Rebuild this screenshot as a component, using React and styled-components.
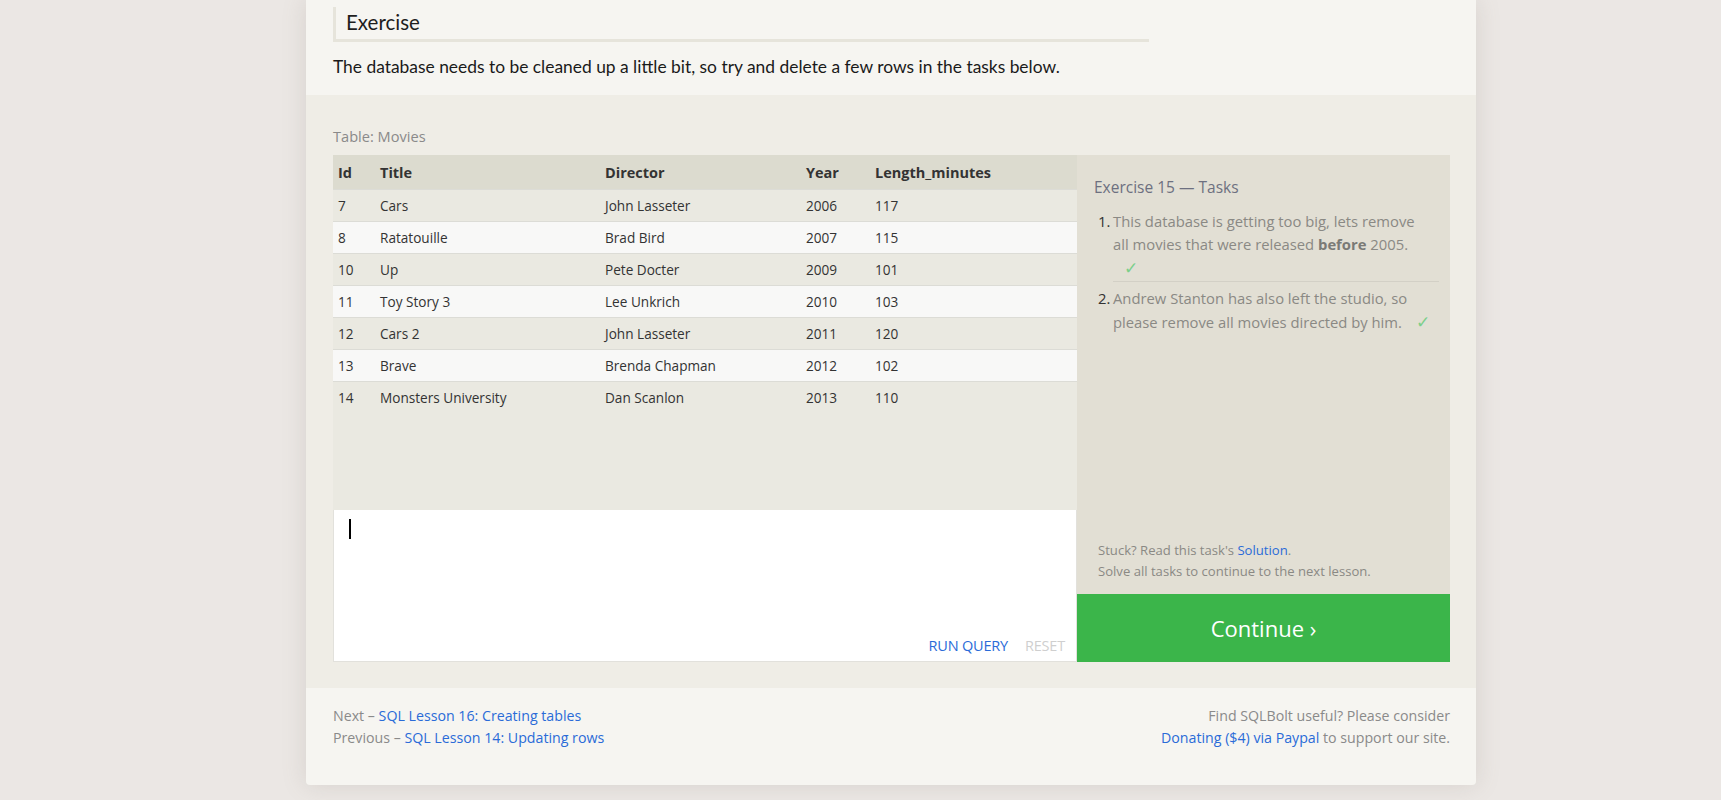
import React from 'react';
import styled, { createGlobalStyle } from 'styled-components';

const GlobalStyle = createGlobalStyle`
  body {
    margin: 0;
    background: #ebe7e4;
    font-family: "Open Sans", "Noto Sans", sans-serif;
  }
`;

const Page = styled.div`
  min-height: 800px;
  padding-left: 306px;
`;

const Sheet = styled.div`
  width: 1170px;
  background: #f6f5f1;
  border-radius: 0 0 4px 4px;
  box-shadow: 0 0 24px rgba(120, 110, 100, 0.18);
`;

const Intro = styled.section`
  padding: 7px 27px 0;
  height: 88px;
`;

const Heading = styled.h3`
  margin: 0;
  width: 803px;
  height: 32px;
  padding-left: 10px;
  border-left: 3px solid #e6e4db;
  border-bottom: 3px solid #e6e4db;
  font-family: "Lato", sans-serif;
  font-weight: 400;
  font-size: 20.5px;
  line-height: 30px;
  color: #1e1e1e;
`;

const Lead = styled.p`
  margin: 13px 0 0;
  font-family: "Lato", sans-serif;
  font-size: 17.4px;
  line-height: 24px;
  color: #1a1a1a;
`;

const Exercise = styled.section`
  background: #efede6;
  padding: 31px 26px 26px 27px;
`;

const Caption = styled.div`
  font-size: 14.6px;
  line-height: 20px;
  color: #8a8a8a;
  margin-bottom: 9px;
`;

const Workspace = styled.div`
  display: flex;
`;

const Left = styled.div`
  width: 744px;
  display: flex;
  flex-direction: column;
`;

const TableArea = styled.div`
  height: 355px;
  background: #eae9e1;
`;

const Row = styled.div`
  display: grid;
  grid-template-columns: 42px 225px 201px 69px 1fr;
  height: ${(p) => (p.$head ? '34px' : '32px')};
  align-items: center;
  background: ${(p) => (p.$head ? '#dcdbcf' : p.$even ? '#f8f8f7' : '#eae9e1')};
  border-top: ${(p) => (p.$head ? 'none' : '1px solid #dcdcd6')};
  box-sizing: border-box;
  font-size: ${(p) => (p.$head ? '14.5px' : '13.6px')};
  font-weight: ${(p) => (p.$head ? 700 : 400)};
  color: ${(p) => (p.$head ? '#333' : '#333')};
`;

const Cell = styled.div`
  padding-left: 5px;
  white-space: nowrap;
`;

const Editor = styled.div`
  height: 152px;
  background: #fff;
  border: 1px solid #e2e1dc;
  border-top: none;
  box-sizing: border-box;
  display: flex;
  flex-direction: column;
  justify-content: space-between;
  padding: 9px 11px 6px 15px;
`;

const Caret = styled.div`
  width: 2px;
  height: 20px;
  background: #000;
`;

const Actions = styled.div`
  display: flex;
  justify-content: flex-end;
  gap: 17px;
`;

const Action = styled.span`
  font-size: 14.5px;
  color: ${(p) => (p.$muted ? '#cfcfcf' : '#2a6bd8')};
  letter-spacing: -0.2px;
`;

const Side = styled.div`
  width: 373px;
  display: flex;
  flex-direction: column;
`;

const Tasks = styled.div`
  flex: 1;
  background: #e2dfd4;
  padding: 21px 11px 12px 17px;
  display: flex;
  flex-direction: column;
`;

const TasksTitle = styled.div`
  font-size: 15.5px;
  line-height: 22px;
  color: #6d7080;
  margin-bottom: 12px;
`;

const TaskList = styled.ol`
  margin: 0;
  padding: 0;
  list-style: none;
`;

const Task = styled.li`
  display: grid;
  grid-template-columns: 19px 1fr;
  padding: ${(p) => (p.$first ? '0 0 2px' : '3px 0 0')};
  font-size: 14.8px;
  line-height: 23px;
  color: #8a8984;
`;

const Num = styled.span`
  color: #333;
  padding-left: 4px;
`;

const TaskText = styled.span`
  white-space: nowrap;
  border-bottom: ${(p) => (p.$rule ? '1px solid #d3d0c6' : 'none')};
  padding-bottom: ${(p) => (p.$rule ? '1px' : '0')};
  b {
    color: #7a7a76;
  }
`;

const Check = styled.span`
  font-size: 17px;
  color: #7ccf8b;
  margin-left: ${(p) => p.$gap || '6px'};
`;

const Hint = styled.div`
  margin-top: auto;
  padding-left: 4px;
  font-size: 13.1px;
  line-height: 21px;
  color: #8a8984;
`;

const Link = styled.a`
  color: #2a6bd8;
  text-decoration: none;
`;

const Continue = styled.button`
  height: 68px;
  border: none;
  background: #3bb54a;
  color: #fff;
  font-family: "Open Sans", sans-serif;
  font-size: 22px;
  cursor: pointer;
`;

const Footer = styled.footer`
  display: flex;
  justify-content: space-between;
  padding: 17px 26px 36px 27px;
  font-size: 14.2px;
  line-height: 22px;
  color: #8a8a8a;
`;

const FootCol = styled.div`
  text-align: ${(p) => (p.$right ? 'right' : 'left')};
`;

const movies = [
  [7, 'Cars', 'John Lasseter', 2006, 117],
  [8, 'Ratatouille', 'Brad Bird', 2007, 115],
  [10, 'Up', 'Pete Docter', 2009, 101],
  [11, 'Toy Story 3', 'Lee Unkrich', 2010, 103],
  [12, 'Cars 2', 'John Lasseter', 2011, 120],
  [13, 'Brave', 'Brenda Chapman', 2012, 102],
  [14, 'Monsters University', 'Dan Scanlon', 2013, 110],
];

export default function App() {
  return (
    <Page>
      <GlobalStyle />
      <Sheet>
        <Intro>
          <Heading>Exercise</Heading>
          <Lead>
            The database needs to be cleaned up a little bit, so try and delete a few rows in the tasks below.
          </Lead>
        </Intro>

        <Exercise>
          <Caption>Table: Movies</Caption>
          <Workspace>
            <Left>
              <TableArea>
                <Row $head>
                  <Cell>Id</Cell>
                  <Cell>Title</Cell>
                  <Cell>Director</Cell>
                  <Cell>Year</Cell>
                  <Cell>Length_minutes</Cell>
                </Row>
                {movies.map((m, i) => (
                  <Row key={m[0]} $even={i % 2 === 1}>
                    {m.map((v, j) => (
                      <Cell key={j}>{v}</Cell>
                    ))}
                  </Row>
                ))}
              </TableArea>
              <Editor>
                <Caret />
                <Actions>
                  <Action>RUN QUERY</Action>
                  <Action $muted>RESET</Action>
                </Actions>
              </Editor>
            </Left>

            <Side>
              <Tasks>
                <TasksTitle>Exercise 15 — Tasks</TasksTitle>
                <TaskList>
                  <Task $first>
                    <Num>1.</Num>
                    <TaskText $rule>
                      This database is getting too big, lets remove
                      <br />
                      all movies that were released <b>before</b> 2005.
                      <br />
                      <Check $gap="11px">✓</Check>
                    </TaskText>
                  </Task>
                  <Task>
                    <Num>2.</Num>
                    <TaskText>
                      Andrew Stanton has also left the studio, so
                      <br />
                      please remove all movies directed by him.
                      <Check $gap="14px">✓</Check>
                    </TaskText>
                  </Task>
                </TaskList>
                <Hint>
                  Stuck? Read this task's <Link href="#">Solution</Link>.
                  <br />
                  Solve all tasks to continue to the next lesson.
                </Hint>
              </Tasks>
              <Continue>Continue ›</Continue>
            </Side>
          </Workspace>
        </Exercise>

        <Footer>
          <FootCol>
            Next – <Link href="#">SQL Lesson 16: Creating tables</Link>
            <br />
            Previous – <Link href="#">SQL Lesson 14: Updating rows</Link>
          </FootCol>
          <FootCol $right>
            Find SQLBolt useful? Please consider
            <br />
            <Link href="#">Donating ($4) via Paypal</Link> to support our site.
          </FootCol>
        </Footer>
      </Sheet>
    </Page>
  );
}
